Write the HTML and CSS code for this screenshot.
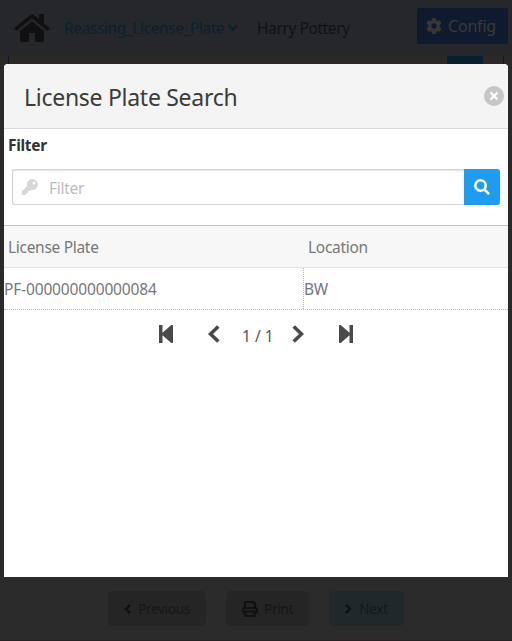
FILE: index.html
```
<!DOCTYPE html>
<html lang="en">
<head>
<meta charset="utf-8">
<title>License Plate Search</title>
<link rel="stylesheet" href="styles.css">
</head>
<body>
<div class="page">
  <header class="topbar">
    <svg class="home" viewBox="0 0 36 28"><path d="M0 14.3 16.2 1q1.8-1.4 3.6 0L25 5.3V0h5v9.4l6 4.9-2.3 2.8L18 4.3 2.3 17.1z"/><path d="M6 17.1 18 7.3l12 9.8V26q0 2-2 2h-7v-9h-6v9H8q-2 0-2-2z"/></svg>
    <span class="menu">Reassing_License_Plate</span>
    <svg class="menu-caret" viewBox="0 0 10 8"><path d="M1.2 1.8 5 5.7l3.8-3.9"/></svg>
    <span class="user">Harry Pottery</span>
    <button class="config">
      <svg class="gear" viewBox="0 0 16 16"><path fill-rule="evenodd" d="M6.3 0h3.4l.5 2.3 1.3.7 2.2-.8 1.8 3-1.8 1.7v2.2l1.8 1.7-1.8 3-2.2-.8-1.3.7-.5 2.3H6.3l-.5-2.3-1.3-.7-2.2.8-1.8-3 1.8-1.7V6.900L.5 5.200l1.800-3 2.200.800 1.300-.700zM8 5.300a2.700 2.700 0 1 0 0 5.400 2.700 2.700 0 0 0 0-5.400z"/></svg>
      <span class="config-label">Config</span>
    </button>
  </header>
  <main class="content">
    <div class="panel"><span class="panel-search"></span></div>
  </main>
  <footer class="actions">
    <button class="action previous"><svg class="chev" viewBox="0 0 7 10"><path d="M6 .8 2 5l4 4.200"/></svg><span>Previous</span></button>
    <button class="action print"><svg class="printer" viewBox="0 0 16 16"><path d="M3 7V1h8.500L13 2.500V7M3 11.500H1V8.500Q1 7 2.500 7h11Q15 7 15 8.500v3h-2M3.500 10.500h9V15h-9z"/></svg><span>Print</span></button>
    <button class="action next"><svg class="chev" viewBox="0 0 7 10"><path d="m1 .8 4 4.200-4 4.200"/></svg><span>Next</span></button>
  </footer>
</div>
<section class="dialog">
  <div class="dialog-head">
    <h1>License Plate Search</h1>
    <svg class="close" viewBox="0 0 20 20"><circle cx="10" cy="10" r="10"/><path d="m6.500 6.500 7 7m0-7-7 7"/></svg>
  </div>
  <div class="filter-title">Filter</div>
  <div class="search">
    <div class="field">
      <svg class="key" viewBox="0 0 16 16"><path fill-rule="evenodd" d="M10.500 0A5.500 5.500 0 1 1 9 10.800L7.800 12H6v2H4v2H.7Q0 16 0 15.300v-3l5.200-5.200A5.500 5.500 0 0 1 10.500 0zM12 2.500a1.500 1.500 0 1 0 0 3 1.500 1.500 0 0 0 0-3z"/></svg>
      <span>Filter</span>
    </div>
    <button class="search-btn"><svg viewBox="0 0 16 16"><circle cx="6.500" cy="6.500" r="5.200"/><path d="m10.300 10.300 4.800 4.800"/></svg></button>
  </div>
  <div class="row head"><div class="cell">License Plate</div><div class="cell">Location</div></div>
  <div class="row data"><div class="cell"><span class="plate">PF-000000000000084</span></div><div class="cell">BW</div></div>
  <nav class="pager">
    <svg class="jump" viewBox="0 0 14 18"><path d="M0 0h3.500v7.800L12 .3q2-1 2 .7v16q0 1.700-2 .7L3.500 10.200V18H0z"/></svg>
    <svg class="step back" viewBox="0 0 12 18"><path d="M10.300 1.500 2.500 9l7.800 7.500"/></svg>
    <span class="count">1 / 1</span>
    <svg class="step forward" viewBox="0 0 12 18"><path d="M1.700 1.500 9.500 9l-7.800 7.500"/></svg>
    <svg class="jump" viewBox="0 0 14 18"><path d="M14 0h-3.500v7.800L2 .3Q0-.7 0 1v16q0 1.700 2 .7l8.500-7.500V18H14z"/></svg>
  </nav>
</section>
</body>
</html>
```
FILE: styles.css
```
* { box-sizing: border-box; }
body {
  margin: 0;
  background: #2b2b2b;
  color: #77777a;
  font: 15.5px/20px "Noto Sans", sans-serif;
  letter-spacing: -.3px;
  overflow: hidden;
}
button { font: inherit; letter-spacing: inherit; border: 0; padding: 0; }
svg { display: block; flex: none; }
.page { display: flex; flex-direction: column; height: 641px; }
.topbar {
  display: flex;
  align-items: center;
  height: 56px;
  padding: 0 4px 0 14px;
  background: #26272b;
  color: #101113;
}
.home { width: 36px; height: 28px; fill: #101010; }
.menu { margin-left: 14px; width: 161px; color: #0b212e; letter-spacing: -.4px; white-space: nowrap; }
.menu-caret { width: 10px; height: 8px; margin-left: 3px; fill: none; stroke: #0b212e; stroke-width: 2.6; stroke-linecap: round; }
.user { margin-left: 19px; letter-spacing: -.4px; white-space: nowrap; }
.config {
  display: flex;
  align-items: center;
  width: 91px;
  height: 36px;
  margin: -4px 0 0 auto;
  padding-left: 9px;
  border-radius: 3px;
  background: #0f1a2f;
  color: #38393c;
  font-size: 16px;
  letter-spacing: -.2px;
}
.gear { width: 16px; height: 16px; fill: #383735; }
.config-label { margin-left: 6px; }
.content { height: 521px; padding: 0 8px; background: #2b2927; }
.panel { display: flex; justify-content: flex-end; height: 100%; padding-right: 20px; border: solid #101a2c; border-width: 0 1px; }
.panel-search { width: 36px; height: 20px; background: #0a1f2d; }
.actions {
  display: flex;
  gap: 20px;
  height: 64px;
  padding: 14px 0 0 108px;
  background: #2b2b2b;
  border-bottom: 1px solid #251f22;
}
.action {
  display: flex;
  align-items: center;
  justify-content: center;
  gap: 7px;
  height: 35px;
  border-radius: 5px;
  background: #252525;
  color: #171717;
  font-size: 13.5px;
}
.previous { width: 98px; }
.print { width: 83px; gap: 6px; }
.next { width: 75px; background: #20282b; color: #11181b; }
.chev { width: 7px; height: 10px; fill: none; stroke: #111; stroke-width: 2.4; }
.printer { width: 16px; height: 16px; fill: none; stroke: #111; stroke-width: 2.2; }
.dialog {
  position: absolute;
  left: 4px;
  top: 64px;
  width: 504px;
  height: 513px;
  border-radius: 4px 4px 0 0;
  background: #fff;
  overflow: hidden;
}
.dialog-head {
  display: flex;
  align-items: center;
  justify-content: space-between;
  height: 65px;
  padding: 0 4px 0 20px;
  background: #f4f4f4;
  border-bottom: 1px solid #d9d9d9;
}
h1 { margin: 2px 0 0; color: #3b3b3b; font-size: 23px; line-height: 30px; font-weight: 400; letter-spacing: -.28px; white-space: nowrap; }
.close { width: 20px; height: 20px; fill: #c6c6c6; }
.close path { stroke: #fff; stroke-width: 2.4; }
.filter-title { height: 40px; padding: 6px 4px 0; color: #333; font-weight: 700; }
.search { display: flex; height: 36px; margin: 0 8px 20px; }
.field {
  display: flex;
  align-items: center;
  flex: 1;
  padding: 2px 0 0 9px;
  gap: 11px;
  border: 1px solid #d4d4d4;
  border-right: 0;
  border-radius: 3px 0 0 3px;
  box-shadow: inset 0 1px 2px #e4e4e4;
  color: #bdbdbd;
}
.key { width: 16px; height: 16px; margin-top: -3px; fill: #d7d7d7; }
.search-btn { display: flex; align-items: center; justify-content: center; width: 36px; border-radius: 0 3px 3px 0; background: #209cee; }
.search-btn svg { width: 16px; height: 16px; fill: none; stroke: #fff; stroke-width: 2.6; }
.row { display: grid; grid-template-columns: 300px 204px; line-height: 42px; }
.head { height: 43px; background: #f7f7f7; border-top: 1px solid #c6c6c6; border-bottom: 1px solid #e1e1e1; }
.head .cell { padding: 1px 4px 0; line-height: 41px; }
.data { height: 42px; border-bottom: 1px dotted #b8b8b8; }
.data .cell { height: 41px; }
.data .cell:first-child { border-right: 1px dotted #b8b8b8; }
.plate { letter-spacing: -.15px; }
.pager { display: flex; align-items: flex-start; height: 40px; padding: 15px 0 0 155px; color: #555; }
.pager svg { height: 18px; fill: #4a4a4a; }
.jump { width: 14px; }
.pager .step { width: 12px; fill: none; stroke: #4a4a4a; stroke-width: 3.6; }
.back { margin-left: 35px; }
.count { width: 33px; margin: 1px 0 0 22px; letter-spacing: 0; white-space: nowrap; }
.forward { margin: 0 35px 0 17px; }
```
